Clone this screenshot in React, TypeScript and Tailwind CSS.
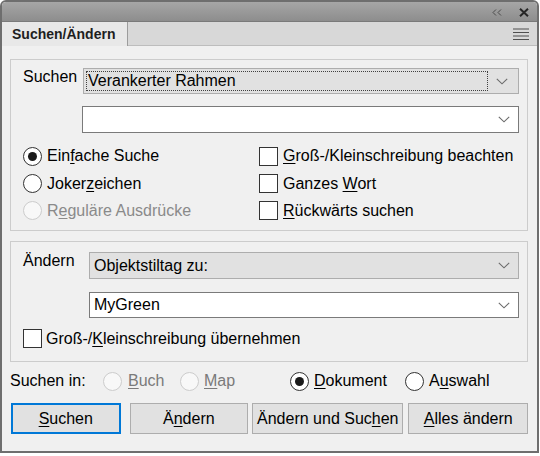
import React from "react";

const font = { fontFamily: '"Liberation Sans", Arial, sans-serif' };

function U({ children }: { children: React.ReactNode }) {
  return <span className="underline decoration-1 underline-offset-[2px]">{children}</span>;
}

function Radio({ checked, disabled }: { checked?: boolean; disabled?: boolean }) {
  return (
    <span
      className={
        disabled
          ? "w-[19px] h-[19px] rounded-full border border-[#cccccc] bg-[#f8f8f8] flex items-center justify-center shrink-0"
          : "w-[19px] h-[19px] rounded-full border border-[#333333] bg-white flex items-center justify-center shrink-0"
      }
    >
      {checked && <span className="w-[9px] h-[9px] rounded-full bg-[#1a1a1a]" />}
    </span>
  );
}

function Check() {
  return <span className="w-[19px] h-[19px] border border-[#333333] bg-white shrink-0" />;
}

function Chevron() {
  return (
    <svg width="12" height="7" viewBox="0 0 12 7" className="shrink-0">
      <path d="M0.8 0.8 L6 5.8 L11.2 0.8" fill="none" stroke="#6a6a6a" strokeWidth="1.1" />
    </svg>
  );
}

export default function App() {
  return (
    <div className="w-[540px] h-[456px] bg-white text-black" style={font}>
      <div className="w-[539px] h-[453px] border-2 border-[#6e6e6e] rounded-t-[6px] overflow-hidden flex flex-col">
        {/* title bar */}
        <div className="h-[20px] shrink-0 bg-gradient-to-b from-[#a6a6a6] to-[#8d8d8d] border-b border-[#7a7a7a] flex items-center justify-end">
          <svg width="10" height="7" viewBox="0 0 10 7" className="mr-[17px] mt-[1px]">
            <path d="M4 0.5 L1 3.5 L4 6.5 M9 0.5 L6 3.5 L9 6.5" fill="none" stroke="#4a4a4a" strokeWidth="1" />
          </svg>
          <svg width="10" height="9" viewBox="0 0 10 9" className="mr-[8px] mt-[1px]">
            <path d="M1 0.8 L9 8.2 M9 0.8 L1 8.2" fill="none" stroke="#262626" strokeWidth="2" />
          </svg>
        </div>
        {/* tab bar */}
        <div className="h-[24px] shrink-0 flex">
          <div className="w-[126px] bg-[#e8e8e8] border-r border-[#9c9c9c] flex items-center pl-[10px] text-[14px] font-bold text-[#1e1e1e]">
            Suchen/Ändern
          </div>
          <div className="flex-1 bg-[#d8d8d8] border-b border-[#bdbdbd] flex items-center justify-end pr-[8px]">
            <svg width="16" height="12" viewBox="0 0 16 12">
              <path d="M0 1 H16 M0 4.5 H16 M0 8 H16 M0 11.5 H16" stroke="#4f4f4f" strokeWidth="1.2" />
            </svg>
          </div>
        </div>
        {/* body */}
        <div className="flex-1 bg-[#f0f0f0] pl-[8px] pr-[9px] pt-[13px] text-[16px] leading-[18px]">
          {/* group 1 */}
          <div className="h-[172px] border border-[#cccccc] flex flex-col">
            <div className="mt-[8px] h-[26px] flex">
              <div className="w-[72px] pl-[12px] shrink-0">Suchen</div>
              <div className="flex-1 mr-[8px] bg-[#e1e1e1] border border-[#adadad] flex p-[2px]">
                <div className="flex-1 border border-dotted border-[#404040] flex items-center pl-[1px]">
                  Verankerter Rahmen
                </div>
                <div className="w-[28px] flex items-center justify-center">
                  <Chevron />
                </div>
              </div>
            </div>
            <div className="mt-[12px] h-[27px] ml-[71px] mr-[8px] bg-white border border-[#7a7a7a] flex items-center justify-end pr-[8px]">
              <Chevron />
            </div>
            <div className="mt-[9px] grid grid-cols-[236px_1fr] pl-[12px]">
              <div className="h-[28px] flex items-center gap-[5px]">
                <Radio checked />
                <span>
                  Ein<U>f</U>ache Suche
                </span>
              </div>
              <div className="h-[28px] flex items-center gap-[5px]">
                <Check />
                <span>
                  <U>G</U>roß-/Kleinschreibung beachten
                </span>
              </div>
              <div className="h-[27px] flex items-center gap-[5px]">
                <Radio />
                <span>
                  Joker<U>z</U>eichen
                </span>
              </div>
              <div className="h-[27px] flex items-center gap-[5px]">
                <Check />
                <span>
                  Ganzes <U>W</U>ort
                </span>
              </div>
              <div className="h-[27px] flex items-center gap-[5px] text-[#8a8a8a]">
                <Radio disabled />
                <span>
                  R<U>e</U>guläre Ausdrücke
                </span>
              </div>
              <div className="h-[27px] flex items-center gap-[5px]">
                <Check />
                <span>
                  <U>R</U>ückwärts suchen
                </span>
              </div>
            </div>
          </div>
          {/* group 2 */}
          <div className="mt-[10px] h-[121px] border border-[#cccccc] flex flex-col">
            <div className="mt-[10px] h-[27px] flex">
              <div className="w-[78px] pl-[12px] shrink-0">Ändern</div>
              <div className="flex-1 mr-[8px] bg-[#e1e1e1] border border-[#adadad] flex items-center pl-[4px] pr-[8px]">
                <span className="flex-1">Objektstiltag zu:</span>
                <Chevron />
              </div>
            </div>
            <div className="mt-[13px] h-[26px] ml-[78px] mr-[8px] bg-white border border-[#7a7a7a] flex items-center pl-[4px] pr-[8px]">
              <span className="flex-1">MyGreen</span>
              <Chevron />
            </div>
            <div className="mt-[11px] h-[19px] flex items-center gap-[4px] pl-[12px]">
              <Check />
              <span>
                Groß-/<U>K</U>leinschreibung übernehmen
              </span>
            </div>
          </div>
          {/* Suchen in */}
          <div className="mt-[5px] h-[28px] flex items-center">
            <div className="w-[93px] shrink-0">Suchen in:</div>
            <div className="w-[77px] shrink-0 flex items-center gap-[6px] text-[#7a7a7a]">
              <Radio disabled />
              <span>
                <U>B</U>uch
              </span>
            </div>
            <div className="w-[110px] shrink-0 flex items-center gap-[5px] text-[#7a7a7a]">
              <Radio disabled />
              <span>
                <U>M</U>ap
              </span>
            </div>
            <div className="w-[115px] shrink-0 flex items-center gap-[5px]">
              <Radio checked />
              <span>
                <U>D</U>okument
              </span>
            </div>
            <div className="flex items-center gap-[5px]">
              <Radio />
              <span>
                A<U>u</U>swahl
              </span>
            </div>
          </div>
          {/* buttons */}
          <div className="mt-[8px] h-[31px] flex">
            <div className="ml-[1px] w-[110px] bg-[#e1e1e1] border-2 border-[#0078d7] flex items-center justify-center">
              <span>
                <U>S</U>uchen
              </span>
            </div>
            <div className="ml-[9px] w-[119px] bg-[#e1e1e1] border border-[#adadad] flex items-center justify-center">
              <span>
                Ä<U>n</U>dern
              </span>
            </div>
            <div className="ml-[4px] w-[152px] bg-[#e1e1e1] border border-[#adadad] flex items-center justify-center">
              <span>
                Ändern und Suc<U>h</U>en
              </span>
            </div>
            <div className="ml-[5px] w-[120px] bg-[#e1e1e1] border border-[#adadad] flex items-center justify-center">
              <span>
                <U>A</U>lles ändern
              </span>
            </div>
          </div>
        </div>
      </div>
    </div>
  );
}
